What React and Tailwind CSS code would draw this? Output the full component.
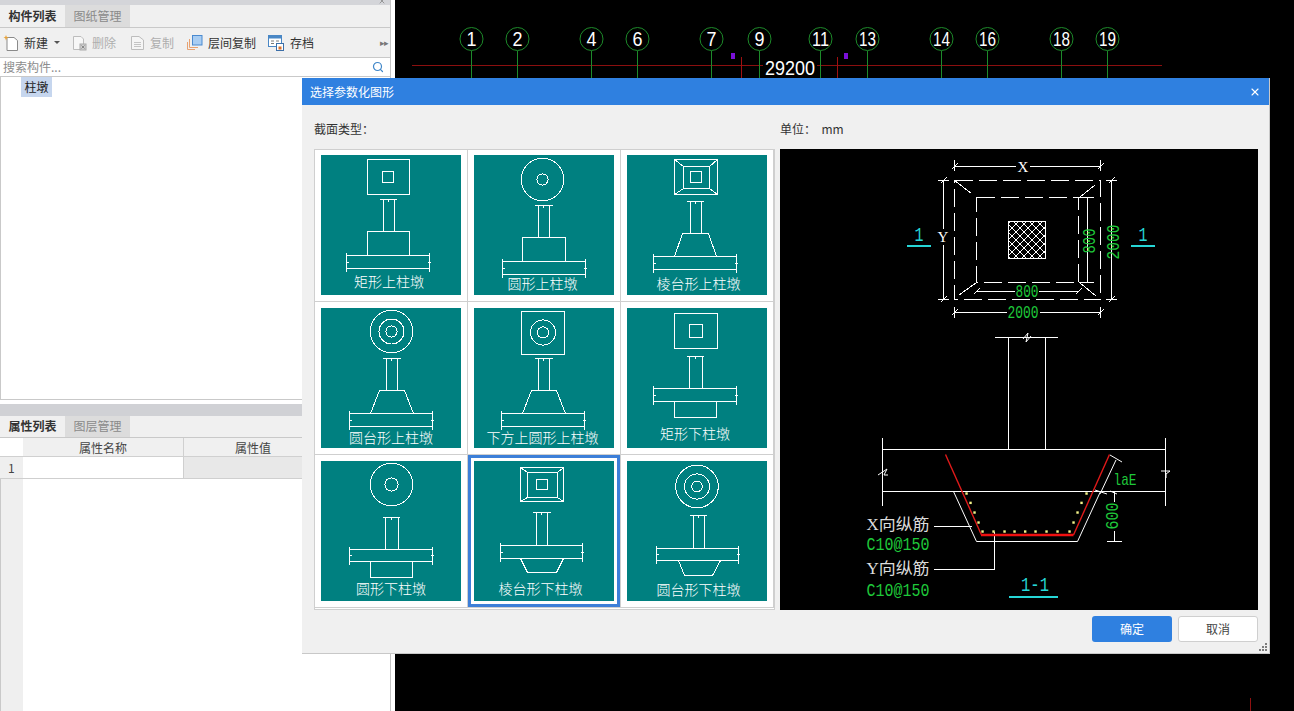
import React from "react";
import { Search, X } from "lucide-react";

const CJK = "font-['Noto_Sans_CJK_SC','Noto_Sans',sans-serif]";
const W = "#ffffff";

function Ln({ x1, y1, x2, y2, c = W, w = 1, dash }) {
  return <line x1={x1} y1={y1} x2={x2} y2={y2} stroke={c} strokeWidth={w} strokeDasharray={dash} />;
}
function Rc({ x1, y1, x2, y2, c = W, dash }) {
  return <rect x={x1} y={y1} width={x2 - x1} height={y2 - y1} fill="none" stroke={c} strokeDasharray={dash} />;
}
function Cc({ x, y, r }) {
  return <circle cx={x} cy={y} r={r} fill="none" stroke={W} />;
}
function Poly({ pts, c = W, w = 1 }) {
  return <polyline points={pts} fill="none" stroke={c} strokeWidth={w} />;
}

function Thumb({ children, dim, col, poly, slab, label, lx, ly }) {
  const [dx1, dx2, dy] = dim;
  const [cl, cr, cb] = col;
  const [sx1, sx2, sy1, sy2] = slab;
  const my = (sy1 + sy2) / 2;
  return (
    <svg width="140" height="140" viewBox="0 0 140 140" shapeRendering="crispEdges" className="block bg-[#008080]">
      {children}
      <Ln x1={dx1} y1={dy} x2={dx2} y2={dy} />
      <Ln x1={(dx1 + dx2) / 2} y1={dy - 1} x2={(dx1 + dx2) / 2} y2={dy + 2} />
      <Ln x1={cl} y1={dy} x2={cl} y2={cb} />
      <Ln x1={cr} y1={dy} x2={cr} y2={cb} />
      <Poly pts={poly} />
      <Ln x1={sx1} y1={sy1} x2={sx2} y2={sy1} />
      <Ln x1={sx1} y1={sy2} x2={sx2} y2={sy2} />
      <Ln x1={sx1} y1={sy1 - 3} x2={sx1} y2={sy2 + 3} />
      <Ln x1={sx2} y1={sy1 - 3} x2={sx2} y2={sy2 + 3} />
      <Ln x1={sx1 - 1} y1={my} x2={sx1 + 2} y2={my} />
      <Ln x1={sx2 - 2} y1={my} x2={sx2 + 1} y2={my} />
      <text x={lx} y={ly + 4} textAnchor="middle" fill="#ffffff" fontSize="14" fontWeight="300" shapeRendering="auto" fontFamily="'Noto Sans CJK SC',sans-serif">{label}</text>
    </svg>
  );
}

function Frustum({ o, m, i }) {
  return (
    <>
      <Rc x1={o[0]} y1={o[1]} x2={o[2]} y2={o[3]} />
      <Rc x1={m[0]} y1={m[1]} x2={m[2]} y2={m[3]} />
      <Rc x1={i[0]} y1={i[1]} x2={i[2]} y2={i[3]} />
      <Ln x1={o[0]} y1={o[1]} x2={m[0]} y2={m[1]} />
      <Ln x1={o[2]} y1={o[1]} x2={m[2]} y2={m[1]} />
      <Ln x1={o[0]} y1={o[3]} x2={m[0]} y2={m[3]} />
      <Ln x1={o[2]} y1={o[3]} x2={m[2]} y2={m[3]} />
    </>
  );
}

const thumbs = [
  <Thumb dim={[58.5, 75.5, 44.5]} col={[62.5, 73.5, 76.5]} poly="46.5,100.5 46.5,76.5 88.5,76.5 88.5,100.5" slab={[25.5, 108.5, 100.5, 113.5]} label="矩形上柱墩" lx={68} ly={127.5}>
    <Rc x1={46.5} y1={4.5} x2={88.5} y2={39.5} />
    <Rc x1={61.5} y1={16.5} x2={72.5} y2={27.5} />
  </Thumb>,
  <Thumb dim={[60.5, 78.5, 50.5]} col={[64.5, 75.5, 82.5]} poly="48.5,106.5 48.5,82.5 91.5,82.5 91.5,106.5" slab={[28.5, 111.5, 106.5, 119.5]} label="圆形上柱墩" lx={68.5} ly={129.5}>
    <Cc x={68.5} y={24.5} r={21.3} />
    <Cc x={68.5} y={24.5} r={5.6} />
  </Thumb>,
  <Thumb dim={[59.5, 76.5, 46.5]} col={[63.5, 74.5, 78.5]} poly="47.5,101.5 55.5,78.5 81.5,78.5 89.5,101.5" slab={[26.5, 109.5, 101.5, 114.5]} label="棱台形上柱墩" lx={71.5} ly={130}>
    <Frustum o={[47.5, 4.5, 90.5, 39.5]} m={[56.5, 11.5, 82.5, 33.5]} i={[63.5, 16.5, 74.5, 27.5]} />
  </Thumb>,
  <Thumb dim={[61.5, 79.5, 50.5]} col={[65.5, 76.5, 82.5]} poly="49.5,105.5 58.5,82.5 83.5,82.5 92.5,105.5" slab={[28.5, 111.5, 105.5, 118.5]} label="圆台形上柱墩" lx={70} ly={130.5}>
    <Cc x={70.5} y={23.5} r={21.3} />
    <Cc x={70.5} y={23.5} r={12.5} />
    <Cc x={70.5} y={23.5} r={5.6} />
  </Thumb>,
  <Thumb dim={[60.5, 78.5, 50.5]} col={[64.5, 75.5, 82.5]} poly="48.5,105.5 57.5,82.5 82.5,82.5 91.5,105.5" slab={[27.5, 110.5, 105.5, 118.5]} label="下方上圆形上柱墩" lx={68.5} ly={130.5}>
    <Rc x1={47.5} y1={3.5} x2={90.5} y2={46.5} />
    <Cc x={69} y={24.5} r={12.6} />
    <Cc x={69} y={24.5} r={5.6} />
  </Thumb>,
  <Thumb dim={[59.5, 76.5, 48.5]} col={[62.5, 75.5, 80.5]} poly="47.5,93.5 47.5,109.5 89.5,109.5 89.5,93.5" slab={[26.5, 109.5, 80.5, 93.5]} label="矩形下柱墩" lx={68} ly={127}>
    <Rc x1={47.5} y1={5.5} x2={90.5} y2={40.5} />
    <Rc x1={62.5} y1={16.5} x2={75.5} y2={29.5} />
  </Thumb>,
  <Thumb dim={[61.5, 78.5, 56.5]} col={[64.5, 77.5, 88.5]} poly="49.5,100.5 49.5,116.5 91.5,116.5 91.5,100.5" slab={[28.5, 111.5, 88.5, 100.5]} label="圆形下柱墩" lx={70} ly={128.5}>
    <Cc x={70.5} y={23.5} r={21.3} />
    <Cc x={70.5} y={23.5} r={6.6} />
  </Thumb>,
  <Thumb dim={[58.5, 76.5, 51.5]} col={[62.5, 73.5, 84.5]} poly="46.5,97.5 53.5,111.5 82.5,111.5 89.5,97.5" slab={[26.5, 108.5, 84.5, 97.5]} label="棱台形下柱墩" lx={66.5} ly={128.5}>
    <Frustum o={[46.5, 6.5, 89.5, 40.5]} m={[53.5, 11.5, 83.5, 36.5]} i={[62.5, 18.5, 73.5, 28.5]} />
  </Thumb>,
  <Thumb dim={[62.5, 79.5, 54.5]} col={[66.5, 77.5, 87.5]} poly="51.5,99.5 57.5,114.5 85.5,114.5 93.5,99.5" slab={[29.5, 111.5, 87.5, 99.5]} label="圆台形下柱墩" lx={71.5} ly={129.5}>
    <Cc x={70} y={25.5} r={21.3} />
    <Cc x={70} y={25.5} r={12.6} />
    <Cc x={70} y={25.5} r={5.3} />
  </Thumb>,
];

const CAD = "'Liberation Mono',monospace";

function CadText({ x, y, t, c = W, size = 16, len, rot, font = CAD }) {
  return (
    <text
      x={x}
      y={y}
      textAnchor="middle"
      dominantBaseline="central"
      fill={c}
      fontSize={size}
      fontFamily={font}
      textLength={len}
      lengthAdjust={len ? "spacingAndGlyphs" : undefined}
      transform={rot ? `rotate(${rot} ${x} ${y})` : undefined}
      shapeRendering="auto"
    >
      {t}
    </text>
  );
}

function Tick({ x, y, s = 3 }) {
  return <Ln x1={x - s} y1={y + s} x2={x + s} y2={y - s} />;
}

function Preview() {
  const G = "#1fc83a";
  const CY = "#26d6d6";
  const dots = [[319,490],[331,518],[343,547],[355,577],[367,604],[400,604],[433,604],[463,604],[495,604],[526,604],[559,604],[592,604],[628,604],[640,577],[652,547],[664,518],[679,490]];
  const d = "18 6";
  return (
    <svg width="478" height="461" viewBox="780 149 478 461" className="block bg-black shrink-0">
      <defs>
        <pattern id="hatch" width="8" height="8" patternUnits="userSpaceOnUse">
          <path d="M0 0L8 8M8 0L0 8" stroke="#fff" strokeWidth="1" />
        </pattern>
      </defs>
      <g shapeRendering="crispEdges">
        <Rc x1={954.5} y1={180.5} x2={1100.5} y2={299.5} dash={d} />
        <Rc x1={976.5} y1={197.5} x2={1078.5} y2={282.5} dash={d} />
        <rect x={1008.5} y={221.5} width={37} height={37} fill="url(#hatch)" stroke="#fff" />
        <Ln x1={954.5} y1={180.5} x2={971.5} y2={193.5} />
        <Ln x1={1095} y1={185} x2={1080} y2={197} />
        <Ln x1={959} y1={295} x2={976.5} y2={282.5} />
        <Ln x1={1080} y1={283} x2={1096} y2={296} />
        <Ln x1={954.5} y1={166.5} x2={1016} y2={166.5} />
        <Ln x1={1030} y1={166.5} x2={1100.5} y2={166.5} />
        <Ln x1={954.5} y1={160} x2={954.5} y2={171} />
        <Ln x1={1100.5} y1={160} x2={1100.5} y2={171} />
        <Tick x={954.5} y={166.5} />
        <Tick x={1100.5} y={166.5} />
        <Ln x1={943.5} y1={180.5} x2={943.5} y2={229} />
        <Ln x1={943.5} y1={245} x2={943.5} y2={299.5} />
        <Ln x1={938} y1={180.5} x2={949} y2={180.5} />
        <Ln x1={938} y1={299.5} x2={949} y2={299.5} />
        <Tick x={943.5} y={180.5} />
        <Tick x={943.5} y={299.5} />
        <Ln x1={1087.5} y1={197.5} x2={1087.5} y2={282.5} />
        <Ln x1={1079} y1={197.5} x2={1094} y2={197.5} />
        <Ln x1={1079} y1={282.5} x2={1094} y2={282.5} />
        <Ln x1={1111.5} y1={180.5} x2={1111.5} y2={299.5} />
        <Ln x1={1106} y1={180.5} x2={1117} y2={180.5} />
        <Ln x1={1106} y1={299.5} x2={1117} y2={299.5} />
        <Tick x={1111.5} y={180.5} />
        <Tick x={1111.5} y={299.5} />
        <Ln x1={976.5} y1={291.5} x2={1015} y2={291.5} />
        <Ln x1={1039} y1={291.5} x2={1078.5} y2={291.5} />
        <Tick x={976.5} y={291.5} />
        <Tick x={1078.5} y={291.5} />
        <Ln x1={954.5} y1={312.5} x2={1007} y2={312.5} />
        <Ln x1={1040} y1={312.5} x2={1100.5} y2={312.5} />
        <Ln x1={954.5} y1={307} x2={954.5} y2={318} />
        <Ln x1={1100.5} y1={307} x2={1100.5} y2={318} />
        <Tick x={954.5} y={312.5} />
        <Tick x={1100.5} y={312.5} />
        <rect x={907} y={245} width={24} height={2} fill={CY} />
        <rect x={1131} y={245} width={24} height={2} fill={CY} />
        <Ln x1={995} y1={337.5} x2={1058} y2={337.5} />
        <Ln x1={1008.5} y1={337.5} x2={1008.5} y2={449.5} />
        <Ln x1={1045.5} y1={337.5} x2={1045.5} y2={449.5} />
        <Ln x1={882.5} y1={449.5} x2={1165.5} y2={449.5} />
        <Ln x1={882.5} y1={491.5} x2={1165.5} y2={491.5} />
        <Ln x1={882.5} y1={438} x2={882.5} y2={506} />
        <Ln x1={1165.5} y1={438} x2={1165.5} y2={506} />
        <Ln x1={934} y1={526.5} x2={972} y2={526.5} />
        <Poly pts="934,569 994.5,569 994.5,532" />
        <rect x={1009} y={596} width={49} height={2} fill={CY} />
      </g>
      <Poly pts="1023,339 1028,333 1026,342 1031,336" />
      <Poly pts="878,475 887,469 884,475 888,475" />
      <Poly pts="1161,471 1170,471 1166,474 1166,478" />
      <Poly pts="953.5,491.5 976.5,541.5 1077.5,541.5 1100.5,491.5" />
      <Poly pts="945.5,454.5 981.5,535" c="#e01a1a" w={1.4} />
      <Poly pts="981,535 1073.5,535" c="#f01010" w={2.4} />
      <Poly pts="1073.5,535 1109.5,454.5" c="#e01a1a" w={1.4} />
      <Ln x1={1116} y1={460} x2={1100} y2={494} />
      <Ln x1={1110} y1={455} x2={1122} y2={462} />
      <Ln x1={1095} y1={490} x2={1107} y2={494} />
      <Ln x1={1114.5} y1={491.5} x2={1114.5} y2={502} />
      <Ln x1={1114.5} y1={531} x2={1114.5} y2={541.5} />
      <Ln x1={1107} y1={541.5} x2={1122} y2={541.5} />
      <Ln x1={1110} y1={491} x2={1117} y2={494} />
      {dots.map(([x, y], i) => (
        <rect key={i} x={860 + x / 3 - 1} y={330 + y / 3 - 1} width="2.4" height="2.4" fill="#f5f58a" />
      ))}
      <CadText x={1023} y={167} t="X" size={15} font="'Liberation Serif',serif" />
      <CadText x={943} y={237} t="Y" size={15} font="'Liberation Serif',serif" />
      <CadText x={919} y={235} t="1" c={CY} size={21} len={9} />
      <CadText x={1143} y={235} t="1" c={CY} size={21} len={9} />
      <CadText x={1090} y={241} t="800" c={G} size={19} len={25} rot={-90} />
      <CadText x={1114} y={242} t="2000" c={G} size={19} len={35} rot={-90} />
      <CadText x={1027} y={291.5} t="800" c={G} size={19} len={23} />
      <CadText x={1023} y={312.5} t="2000" c={G} size={19} len={31} />
      <CadText x={1125} y={480} t="laE" c={G} size={17} len={23} />
      <CadText x={1113} y={516} t="600" c={G} size={18} len={27} rot={-90} />
      <CadText x={898} y={524} t="X向纵筋" c="#dcdcdc" size={16} len={63} font="'Liberation Serif','Noto Sans CJK SC',serif" />
      <CadText x={898} y={545} t="C10@150" c={G} size={18} len={63} />
      <CadText x={898} y={568} t="Y向纵筋" c="#dcdcdc" size={16} len={63} font="'Liberation Serif','Noto Sans CJK SC',serif" />
      <CadText x={898} y={591} t="C10@150" c={G} size={18} len={63} />
      <CadText x={1035} y={585} t="1-1" c={CY} size={20} len={28} />
    </svg>
  );
}

const axes = [
  [471, "1"], [517, "2"], [591, "4"], [637, "6"], [711, "7"], [759, "9"],
  [820, "11"], [867, "13"], [941, "14"], [987, "16"], [1061, "18"], [1107, "19"],
];

function Canvas() {
  return (
    <svg width="899" height="711" viewBox="395 0 899 711" className="block">
      <g shapeRendering="crispEdges">
        <Ln x1={412} y1={65.5} x2={1162} y2={65.5} c="#8b0f0f" />
        <Ln x1={741.5} y1={57} x2={741.5} y2={78} c="#a01010" />
        <Ln x1={837.5} y1={57} x2={837.5} y2={78} c="#a01010" />
        <Ln x1={1250.5} y1={698} x2={1250.5} y2={711} c="#8f1010" />
        <rect x={731} y={53} width={4} height={6} fill="#7a10d8" />
        <rect x={844} y={53} width={4} height={6} fill="#7a10d8" />
        {axes.map(([x]) => <Ln key={x} x1={x + 0.5} y1={51} x2={x + 0.5} y2={78} c="#1d8a2a" />)}
      </g>
      {axes.map(([x, t]) => (
        <g key={x}>
          <circle cx={x + 0.5} cy={39} r={11.5} fill="none" stroke="#1d8a2a" />
          <CadText x={x + 0.5} y={39} t={t} size={20} len={t.length === 1 ? 10 : 17} font="'Liberation Sans',sans-serif" />
        </g>
      ))}
      <rect x={763} y={57} width={54} height={20} fill="#000" />
      <CadText x={790} y={67.5} t="29200" size={20} len={50} font="'Liberation Sans',sans-serif" />
    </svg>
  );
}

function Tabs({ a, b, h, lead }) {
  return (
    <div className={`flex ${h} ${lead} bg-[#f0f0f0] border-b border-[#c9c9c9] text-[12px]`}>
      <div className="w-[65px] text-center font-bold text-[#333]">{a}</div>
      <div className="w-[65px] text-center bg-[#dcdcdc] text-[#8a8a8a]">{b}</div>
    </div>
  );
}

function Tool({ icon, label, gray, ml }) {
  return (
    <div className={`flex items-center gap-[5px] ${ml}`}>
      {icon}
      <span className={gray ? "text-[#aeaeae]" : "text-[#333]"}>{label}</span>
    </div>
  );
}

const IconNew = (
  <svg width="16" height="18" viewBox="0 0 16 18" fill="none">
    <path d="M4 3.5H11L14.5 6.5V16.5H4Z" fill="#fff" stroke="#8a8a8a" />
    <path d="M3 1L3.8 3L6 3.5L3.8 4.2L3 6.5L2.2 4.2L0.5 3.5L2.2 3Z" fill="#e8a33a" />
  </svg>
);
const IconDel = (
  <svg width="15" height="16" viewBox="0 0 15 16" fill="none">
    <path d="M1.5 1.5H9L11.5 4V14.5H1.5Z" fill="#f7f7f7" stroke="#bdbdbd" />
    <rect x="8" y="9" width="6" height="6" fill="#cfcfcf" stroke="#aaa" />
    <path d="M9.5 10.5L12.5 13.5M12.5 10.5L9.5 13.5" stroke="#888" />
  </svg>
);
const IconCopy = (
  <svg width="14" height="16" viewBox="0 0 14 16" fill="none">
    <path d="M0.5 1.5H8L12.5 5V14.5H0.5Z" fill="#f5f5f5" stroke="#bdbdbd" />
    <path d="M3 7.5H10M3 9.5H10M3 11.5H10" stroke="#c4c4c4" />
  </svg>
);
const IconLayer = (
  <svg width="16" height="17" viewBox="0 0 16 17" fill="none">
    <path d="M0.5 8V15.5H8" stroke="#e8a272" />
    <path d="M2.5 5V13.5H11" stroke="#e8a272" />
    <rect x="5.5" y="1.5" width="9.5" height="9.5" fill="#a9cdf2" stroke="#4a8ad0" />
  </svg>
);
const IconSave = (
  <svg width="17" height="16" viewBox="0 0 17 16" fill="none">
    <rect x="0.5" y="0.5" width="13" height="11" fill="#fff" stroke="#4a87c5" />
    <rect x="0.5" y="0.5" width="13" height="3" fill="#4a87c5" />
    <path d="M3 6H6M3 8.5H6M8 6H11" stroke="#7a7a7a" />
    <rect x="8.5" y="8.5" width="7" height="7" fill="#fff" stroke="#3c6fa8" />
    <rect x="10.5" y="11.5" width="3" height="3" fill="#d9722c" />
  </svg>
);

function LeftPanel() {
  return (
    <div className={`w-[395px] h-full shrink-0 flex flex-col bg-white ${CJK}`}>
      <div className="w-[391px] h-full flex flex-col border-r border-[#c4c4c4]">
        <div className="h-[5px] bg-[#d4d5d9] relative overflow-hidden">
          <X size={8} className="absolute right-[4px] -top-[3px] text-[#777]" />
        </div>
        <Tabs a="构件列表" b="图纸管理" h="h-[23px]" lead="leading-[22px]" />
        <div className="h-[30px] bg-[#f0f0f0] border-b border-[#c9c9c9] flex items-center text-[12px] pl-[3px] relative">
          <Tool icon={IconNew} label="新建" ml="" />
          <div className="ml-[6px] w-0 h-0 border-x-[3px] border-x-transparent border-t-[3px] border-t-[#555]" />
          <Tool icon={IconDel} label="删除" gray ml="ml-[12px]" />
          <Tool icon={IconCopy} label="复制" gray ml="ml-[15px]" />
          <Tool icon={IconLayer} label="层间复制" ml="ml-[13px]" />
          <Tool icon={IconSave} label="存档" ml="ml-[12px]" />
          <span className="ml-auto mr-[2px] text-[9px] tracking-[-1px] text-[#777]">▸▸</span>
        </div>
        <div className="h-[19px] bg-white border-b border-[#c9c9c9] flex items-center justify-between pl-[3px] pr-[6px] text-[12px] text-[#8d8d8d]">
          <span>搜索构件...</span>
          <Search size={12} strokeWidth={2.4} className="text-[#3f86c8]" />
        </div>
        <div className="h-[323px] border-b border-l border-[#c9c9c9] pl-[20px]">
          <div className="w-[31px] h-[20px] bg-[#c6d6ee] text-[12px] leading-[20px] text-center text-[#222]">柱墩</div>
        </div>
        <div className="h-[4px]" />
        <div className="h-[12px] bg-[#d0d1d5]" />
        <Tabs a="属性列表" b="图层管理" h="h-[22px]" lead="leading-[20px]" />
        <div className="flex h-[19px] bg-[#f0f0f0] border-b border-[#d0d0d0] text-[12px] leading-[20px] text-[#444] text-center">
          <div className="w-[23px] bg-white" />
          <div className="w-[161px] border-r border-[#d0d0d0]">属性名称</div>
          <div className="w-[138px]">属性值</div>
        </div>
        <div className="flex h-[22px] border-b border-[#cfcfcf] text-[12px] leading-[21px] text-[#444]">
          <div className="w-[23px] bg-[#efefef] pl-[8px]">1</div>
          <div className="w-[161px] bg-white border-r border-[#cfcfcf]" />
          <div className="flex-1 bg-[#e8e8e8]" />
        </div>
        <div className="flex-1 flex">
          <div className="w-[23px] bg-[#efefef] border-l border-[#c9c9c9]" />
        </div>
      </div>
    </div>
  );
}

function Dialog() {
  return (
    <div className={`absolute left-[302px] top-[78px] w-[968px] h-[576px] bg-[#f0f0f0] border-r border-b border-[#c8c8c8] flex flex-col text-[12px] text-[#333] ${CJK}`}>
      <div className="h-[27px] shrink-0 bg-[#2f80e0] flex items-center justify-between pl-[8px] pr-[8px] text-white">
        <span>选择参数化图形</span>
        <X size={12} strokeWidth={2.2} />
      </div>
      <div className="flex gap-[5px] pl-[12px] pt-[16px]">
        <div className="w-[461px] shrink-0">
          <div className="h-[28px] leading-[16px]">截面类型：</div>
        </div>
        <div className="h-[28px] leading-[16px]">单位：&nbsp; mm</div>
      </div>
      <div className="flex gap-[5px] pl-[12px]">
        <div className="w-[461px] h-[461px] shrink-0 bg-white border border-[#cfcfcf] grid grid-cols-3 content-start">
          {thumbs.map((t, i) => (
            <div
              key={i}
              className={`relative w-[153px] ${i < 3 ? "h-[152px] pt-[5px]" : "h-[153px] pt-[6px]"} pl-[6px] border-b border-r border-[#cfcfcf]`}
            >
              {t}
              {i === 7 && <div className="absolute left-0 top-0 w-[152px] h-[152px] border-[3px] border-[#3d7fd8]" />}
            </div>
          ))}
        </div>
        <Preview />
      </div>
      <div className="flex justify-end gap-[6px] pr-[11px] pt-[6px]">
        <div className="w-[80px] h-[26px] rounded-[3px] bg-[#2f80e0] text-white text-center leading-[26px]">确定</div>
        <div className="w-[80px] h-[26px] rounded-[3px] bg-white border border-[#cfcfcf] text-[#444] text-center leading-[24px]">取消</div>
      </div>
      <svg width="9" height="9" viewBox="0 0 9 9" className="absolute right-[1px] bottom-[1px]">
        <path d="M6 0h2v2H6zM3 3h2v2H3zM6 3h2v2H6zM0 6h2v2H0zM3 6h2v2H3zM6 6h2v2H6z" fill="#7d7d7d" />
      </svg>
    </div>
  );
}

export default function App() {
  return (
    <div className="relative w-[1294px] h-[711px] overflow-hidden bg-black flex">
      <LeftPanel />
      <div className="flex-1 bg-black">
        <Canvas />
      </div>
      <Dialog />
    </div>
  );
}
